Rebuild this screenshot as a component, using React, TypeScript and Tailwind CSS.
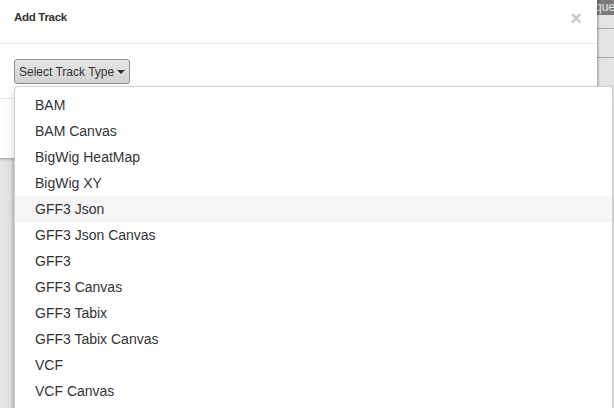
import React from "react";

const trackTypes = [
	"BAM",
	"BAM Canvas",
	"BigWig HeatMap",
	"BigWig XY",
	"GFF3 Json",
	"GFF3 Json Canvas",
	"GFF3",
	"GFF3 Canvas",
	"GFF3 Tabix",
	"GFF3 Tabix Canvas",
	"VCF",
	"VCF Canvas",
];

export default function App() {
	return (
		<div
			className="relative w-[614px] h-[408px] overflow-hidden bg-[#e4e4e4]"
			style={{ fontFamily: '"Liberation Sans", Arial, sans-serif' }}
		>
			{/* page behind the backdrop */}
			<div className="flex flex-col">
				<div className="h-[15px] bg-[#7a7a7a] flex justify-end overflow-hidden">
					<span className="text-[12px] leading-[15px] text-[#e6e6e6] mr-[-1px]">que</span>
				</div>
				<div className="h-[13px]" />
				<div className="h-px bg-[#a8a8a8]" />
				<div className="h-[28px]" />
				<div className="h-px bg-[#a8a8a8]" />
			</div>
			<div className="absolute left-[10px] top-[150px] bottom-0 w-[4px] bg-gradient-to-r from-[#e8e8e8] to-[#c4c4c4]" />

			{/* modal */}
			<div className="absolute left-[-10px] top-[-6px] w-[607px] h-[164px] bg-white rounded-br-[5px] shadow-[1px_1px_3px_rgba(0,0,0,0.35)] flex flex-col">
				<div className="h-[50px] border-b border-[#e5e5e5] flex items-center justify-between pl-[24px] pr-[15px] pb-[2px]">
					<span className="text-[11.5px] font-bold text-[#333] tracking-[-0.3px]">Add Track</span>
					<span className="text-[20px] font-bold text-[#c8c8c8] leading-none">×</span>
				</div>
				<div className="h-[55px] border-b border-[#e5e5e5] pl-[24px] pt-[15px]">
					<button className="h-[25px] px-[4px] flex items-center gap-[3px] rounded-[3px] border border-[#8f8f8f] bg-gradient-to-b from-[#e6e6e6] to-[#d2d2d2] text-[12px] text-[#333]">
						Select Track Type
						<span className="w-0 h-0 border-l-[4px] border-r-[4px] border-t-[4px] border-l-transparent border-r-transparent border-t-[#333] mt-[1px]" />
					</button>
				</div>
			</div>

			{/* dropdown menu */}
			<ul className="absolute left-[14px] top-[86px] bottom-[-8px] w-[599px] bg-white border border-[#d0d0d0] rounded-[4px] shadow-[0_4px_10px_rgba(0,0,0,0.15)] py-[5px]">
				{trackTypes.map((t) => (
					<li
						key={t}
						className={`h-[26px] pl-[20px] flex items-center text-[14px] text-[#333] ${
							t === "GFF3 Json" ? "bg-[#f5f5f5]" : ""
						}`}
					>
						{t}
					</li>
				))}
			</ul>
		</div>
	);
}
